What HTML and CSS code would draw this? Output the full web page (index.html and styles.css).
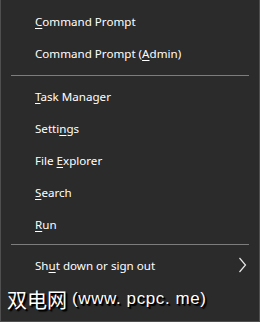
FILE: index.html
```html
<!DOCTYPE html>
<html lang="en">
<head>
    <meta charset="UTF-8">
    <meta name="viewport" content="width=device-width, initial-scale=1.0">
    <title>Quick Link Menu</title>
    <link rel="stylesheet" href="styles.css">
</head>
<body>
    <div class="menu">
        <div class="item"><span><u>C</u>ommand Prompt</span></div>
        <div class="item"><span>Command Prompt (<u>A</u>dmin)</span></div>
        <div class="separator first"></div>
        <div class="item"><span><u>T</u>ask Manager</span></div>
        <div class="item"><span>Setti<u>n</u>gs</span></div>
        <div class="item"><span>File <u>E</u>xplorer</span></div>
        <div class="item"><span><u>S</u>earch</span></div>
        <div class="item"><span><u>R</u>un</span></div>
        <div class="separator"></div>
        <div class="item submenu">
            <span>Sh<u>u</u>t down or sign out</span>
            <svg class="chevron" width="10" height="16" viewBox="0 0 10 16">
                <polyline points="1.5,1 7.5,8 1.5,15" fill="none" stroke="#e8e8e8" stroke-width="1.2"/>
            </svg>
        </div>
        <div class="watermark"><span class="cjk">双电网</span><span class="site">(www. pcpc. me)</span></div>
    </div>
</body>
</html>
```

FILE: styles.css
```css
body {
    margin: 0;
    background: #2b2b2b;
}
.menu {
    width: 258px;
    height: 316px;
    background: #2b2b2b;
    border-left: 1px solid #4f4f4f;
    border-right: 1px solid #4f4f4f;
    border-bottom: 1px solid #4f4f4f;
    padding-top: 5px;
    font-family: "Noto Sans", "Open Sans", sans-serif;
    font-size: 11.6px;
    color: #ffffff;
    overflow: hidden;
}
.item {
    height: 32px;
    display: flex;
    align-items: center;
    padding-left: 34px;
}
.item u {
    text-decoration: underline;
    text-underline-offset: 2px;
}
.separator {
    padding: 4px 10px;
    height: 1px;
}
.separator.first {
    padding-top: 6px;
}
.separator::after {
    content: "";
    display: block;
    height: 1px;
    background: #7d7d7d;
}
.submenu {
    justify-content: space-between;
    padding-right: 11px;
}
.watermark {
    padding-left: 6px;
    height: 36px;
    display: flex;
    align-items: center;
    color: #ffffff;
    text-shadow: 1px 1px 0 #000, 2px 2px 1px #000;
}
.cjk {
    font-family: "Noto Sans CJK SC", sans-serif;
    font-size: 20px;
}
.site {
    font-family: "Liberation Sans", Arial, sans-serif;
    font-size: 17px;
    letter-spacing: 0.6px;
    margin-left: 5px;
}
```
